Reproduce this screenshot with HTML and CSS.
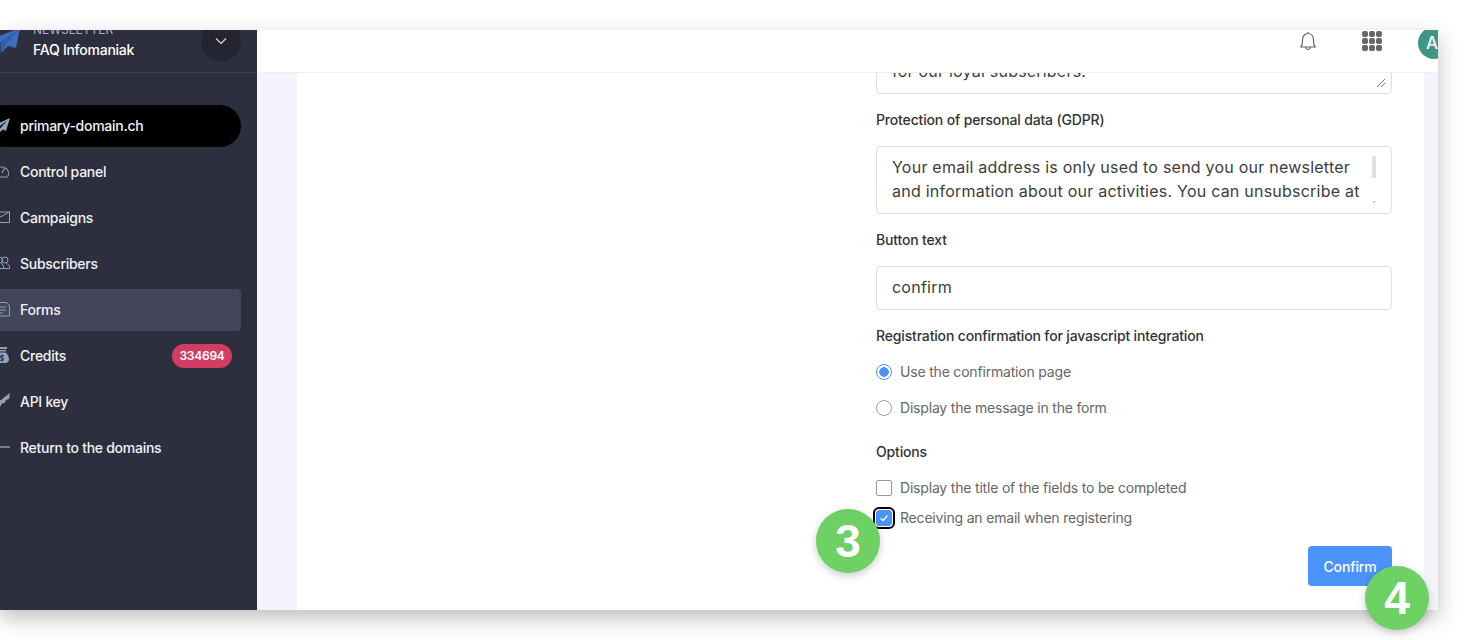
FILE: index.html
```html
<!DOCTYPE html>
<html lang="en">
<head>
    <meta charset="UTF-8">
    <title>FAQ Infomaniak - Newsletter</title>
    <link rel="stylesheet" href="styles.css">
</head>
<body>
    <div class="window">
        <aside class="sidebar">
            <div class="side-head">
                <svg class="logo" viewBox="0 0 24 24"><path d="M24 -1 L-2 9 L4.500 13 L5 24 L12 17 L20 19 Z" fill="#3a6fc0"/><path d="M24 -1 L4.500 13 L5 24 L10 15 Z" fill="#2f5ea8"/></svg>
                <div class="side-title">
                    <span class="side-kicker">NEWSLETTER</span>
                    <span class="side-name">FAQ Infomaniak</span>
                </div>
                <div class="side-toggle">
                    <svg width="14" height="14" viewBox="0 0 14 14"><path d="M2 4.500 L7 9.500 L12 4.500" fill="none" stroke="#d5d8e2" stroke-width="1.200"/></svg>
                </div>
            </div>
            <nav class="side-nav">
                <a class="nav-item nav-domain">
                    <svg class="nav-icon" viewBox="0 0 16 16"><path d="M16 1 L0 8 L4 10.500 L13 3.500 L6 11.500 L6 15 L9 12.500 L12 14 Z" fill="#8fa3bd"/></svg>
                    primary-domain.ch
                </a>
                <a class="nav-item">
                    <svg class="nav-icon" viewBox="0 0 16 16"><path d="M2.500 14 A6.500 6.500 0 1 1 13.500 14 Z M8 10 L10.500 5 M4 8 H6" fill="none" stroke="#8fa3bd" stroke-width="1.100"/></svg>
                    Control panel
                </a>
                <a class="nav-item">
                    <svg class="nav-icon" viewBox="0 0 16 16"><path d="M.5 3 H15.500 V13.500 H.5 Z M.5 11 L15.500 3" fill="none" stroke="#8fa3bd" stroke-width="1"/></svg>
                    Campaigns
                </a>
                <a class="nav-item">
                    <svg class="nav-icon" viewBox="0 0 16 16"><circle cx="5.500" cy="5" r="3" fill="none" stroke="#8fa3bd"/><circle cx="11" cy="5" r="3" fill="none" stroke="#8fa3bd"/><path d="M3.500 8 L.5 11 V13.500 H9.500 V11 L7.500 8 M12.500 8 L15.500 11 V13.500 H9.500" fill="none" stroke="#8fa3bd"/></svg>
                    Subscribers
                </a>
                <a class="nav-item nav-active">
                    <svg class="nav-icon" viewBox="0 0 16 16"><path d="M.5 1.500 H12.500 L15.500 4.500 V15 H.5 M4 6 H12 M4 9 H12 M4 12 H9" fill="none" stroke="#8fa3bd" stroke-width="1"/></svg>
                    Forms
                </a>
                <a class="nav-item">
                    <svg class="nav-icon" viewBox="0 0 16 16"><path d="M3 0 H13 V2 H3 Z M4 3 H12 V4.500 H4 Z M4 5.500 H12 Q15 9 15 12 Q15 16 11 16 H5 Q1 16 1 12 Q1 9 4 5.500 Z" fill="#8fa3bd"/><path d="M10 9 Q8 8 6.500 9 Q6 11 8 11 Q10 11 9.500 13 Q8 14 6 13 M8 7.500 V14.500" fill="none" stroke="#2d2f3e"/></svg>
                    Credits
                    <span class="nav-badge">334694</span>
                </a>
                <a class="nav-item">
                    <svg class="nav-icon" viewBox="0 0 16 16"><path d="M16 0 L15 6 L12 7 L11 9.500 Q8.500 10 7.500 11 Q6 16 1.500 15 Q-1.500 11 2 8 L7 7 Z" fill="#8fa3bd"/></svg>
                    API key
                </a>
                <a class="nav-item">
                    <svg class="nav-icon" viewBox="0 0 16 16"><path d="M0 8 H16" fill="none" stroke="#8fa3bd" stroke-width="1.400"/></svg>
                    Return to the domains
                </a>
            </nav>
        </aside>
        <div class="main">
            <header class="topbar">
                <svg class="top-icon" width="18" height="20" viewBox="0 0 18 20"><path d="M9 1 V2.500 M2 16 C3.500 14 3.500 12 3.500 9 C3.500 5 6 2.500 9 2.500 C12 2.500 14.500 5 14.500 9 C14.500 12 14.500 14 16 16 Z M1 16 H17 M6.500 16.500 C7 19 11 19 11.500 16.500" fill="none" stroke="#666" stroke-width="1.200"/></svg>
                <div class="apps">
                    <i></i><i></i><i></i><i></i><i></i><i></i><i></i><i></i><i></i>
                </div>
                <div class="avatar">AJ</div>
            </header>
            <div class="content">
                <section class="panel">
                    <form class="form">
                        <div class="field field-clipped">
                            for our loyal subscribers.
                            <svg class="grip" width="10" height="10" viewBox="0 0 10 10"><path d="M1 9 L9 1 M5 9 L9 5" stroke="#555" stroke-width=".8"/></svg>
                        </div>
                        <label class="field-label">Protection of personal data (GDPR)</label>
                        <div class="field field-scroll">
                            Your email address is only used to send you our newsletter<br>and information about our activities. You can unsubscribe at
                            <span class="scroll-thumb"></span>
                            <span class="scroll-corner"></span>
                        </div>
                        <label class="field-label">Button text</label>
                        <div class="field field-input">confirm</div>
                        <label class="field-label">Registration confirmation for javascript integration</label>
                        <div class="choice choice-radio">
                            <span class="radio radio-on"></span>
                            Use the confirmation page
                        </div>
                        <div class="choice choice-radio">
                            <span class="radio"></span>
                            Display the message in the form
                        </div>
                        <label class="field-label label-options">Options</label>
                        <div class="choice">
                            <span class="check"></span>
                            Display the title of the fields to be completed
                        </div>
                        <div class="choice choice-next">
                            <span class="check check-on">
                                <svg width="12" height="12" viewBox="0 0 12 12"><path d="M2.500 6.200 L5 8.500 L9.500 3.500" fill="none" stroke="#fff" stroke-width="1.300"/></svg>
                            </span>
                            Receiving an email when registering
                        </div>
                        <div class="form-actions">
                            <button type="button" class="btn-confirm">Confirm</button>
                        </div>
                    </form>
                </section>
            </div>
        </div>
    </div>
    <div class="step step-3">3</div>
    <div class="step step-4">4</div>
</body>
</html>
```

FILE: styles.css
```css
html, body {
    margin: 0;
    height: 640px;
    overflow: hidden;
    background-color: #fff;
}
body {
    font-family: Inter, 'Liberation Sans', sans-serif;
    color: #333;
    padding-top: 30px;
    box-sizing: border-box;
    position: relative;
}
.window {
    width: 1438px;
    height: 580px;
    display: flex;
    overflow: hidden;
    box-shadow: 0 8px 20px rgba(0, 0, 0, 0.26);
}
.sidebar {
    width: 257px;
    flex-shrink: 0;
    background-color: #2d2f3e;
    overflow: hidden;
}
.side-head {
    height: 42px;
    display: flex;
    border-bottom: 1px solid #3f4157;
}
.logo {
    width: 24px;
    height: 24px;
    margin-left: -4px;
    margin-top: -1px;
    overflow: visible;
    flex-shrink: 0;
}
.side-title {
    display: flex;
    flex-direction: column;
    align-self: flex-end;
    margin-left: 13px;
    padding-bottom: 12px;
    white-space: nowrap;
}
.side-kicker {
    font-size: 12px;
    line-height: 20px;
    color: #a7afc0;
    margin-top: -20px;
}
.side-name {
    font-size: 14px;
    line-height: 20px;
    font-weight: 500;
    letter-spacing: -0.25px;
    color: #fff;
}
.side-toggle {
    width: 40px;
    height: 40px;
    border-radius: 50%;
    background-color: #23242f;
    margin-left: auto;
    margin-right: 16px;
    margin-top: -9px;
    display: flex;
    align-items: center;
    justify-content: center;
    flex-shrink: 0;
}
.side-nav {
    width: 257px;
    margin-left: -16px;
    margin-top: 32px;
    display: flex;
    flex-direction: column;
    gap: 4px;
}
.nav-item {
    height: 42px;
    display: flex;
    align-items: center;
    gap: 10px;
    padding: 0 9px 2px 10px;
    box-sizing: border-box;
    font-size: 14px;
    font-weight: 500;
    letter-spacing: -0.27px;
    color: #f1f2f6;
    white-space: nowrap;
}
.nav-icon {
    width: 16px;
    height: 16px;
    flex-shrink: 0;
}
.nav-domain {
    background-color: #000;
    border-radius: 21px;
}
.nav-active {
    background-color: #424459;
    border-radius: 4px;
}
.nav-badge {
    margin-left: auto;
    margin-top: 2px;
    width: 60px;
    height: 24px;
    border-radius: 12px;
    background-color: #d33c63;
    color: #fff;
    font-size: 12px;
    font-weight: 600;
    line-height: 24px;
    text-align: center;
    letter-spacing: -0.25px;
}
.main {
    flex: 1;
    min-width: 0;
    display: flex;
    flex-direction: column;
}
.topbar {
    height: 42px;
    flex-shrink: 0;
    background-color: #fff;
    border-bottom: 1px solid #eee;
    display: flex;
    align-items: flex-start;
    justify-content: flex-end;
    position: relative;
    z-index: 1;
}
.top-icon {
    margin-top: 1px;
    margin-right: 45px;
}
.apps {
    width: 20px;
    height: 20px;
    margin-top: 1px;
    margin-right: 36px;
    display: grid;
    grid-template-columns: repeat(3, 1fr);
    gap: 1px;
}
.apps i {
    background-color: #666;
    border-radius: 2px;
}
.avatar {
    width: 32px;
    height: 32px;
    margin-top: -3px;
    margin-right: -12px;
    padding-left: 8px;
    box-sizing: border-box;
    flex-shrink: 0;
    border-radius: 50%;
    background-color: #3f9685;
    color: #fff;
    font-size: 17px;
    font-weight: 500;
    line-height: 32px;
    white-space: nowrap;
}
.content {
    flex: 1;
    min-height: 0;
    background-color: #f4f4fd;
    padding: 0 14px 0 40px;
    overflow: hidden;
}
.panel {
    height: 100%;
    background-color: #fff;
    display: flex;
    justify-content: flex-end;
    padding-right: 32px;
}
.form {
    width: 516px;
    margin-top: -47px;
    display: flex;
    flex-direction: column;
}
.field {
    position: relative;
    box-sizing: border-box;
    border: 1px solid #e0e0e0;
    border-radius: 4px;
    padding: 8px 15px;
    font-size: 16px;
    line-height: 24px;
    letter-spacing: 0.23px;
    color: #3d3d3d;
    white-space: nowrap;
    flex-shrink: 0;
}
.field-clipped {
    height: 68px;
    padding-top: 32px;
}
.field-scroll {
    height: 68px;
}
.field-input {
    height: 44px;
}
.grip {
    position: absolute;
    right: 5px;
    bottom: 5px;
}
.scroll-thumb {
    position: absolute;
    left: 495px;
    top: 9px;
    width: 4px;
    height: 22px;
    background-color: #e0e0e0;
}
.scroll-corner {
    position: absolute;
    left: 496px;
    top: 54px;
    width: 3px;
    height: 3px;
    border-top: 1px solid #ccc;
    border-left: 1px solid #ccc;
    box-sizing: border-box;
}
.field-label {
    display: block;
    font-size: 14px;
    line-height: 20px;
    font-weight: 500;
    letter-spacing: -0.16px;
    color: #333;
    margin: 16px 0;
}
.label-options {
    margin-top: 24px;
}
.choice {
    display: flex;
    align-items: center;
    gap: 8px;
    height: 20px;
    font-size: 14px;
    line-height: 20px;
    letter-spacing: -0.19px;
    color: #666;
    white-space: nowrap;
    flex-shrink: 0;
}
.choice-radio + .choice-radio {
    margin-top: 16px;
}
.choice-next {
    margin-top: 10px;
}
.radio {
    width: 16px;
    height: 16px;
    box-sizing: border-box;
    border-radius: 50%;
    border: 1px solid #999;
    flex-shrink: 0;
}
.radio-on {
    border-color: #4c92fb;
    background: radial-gradient(circle, #4c92fb 0 4.500px, #fff 5px);
}
.check {
    width: 16px;
    height: 16px;
    box-sizing: border-box;
    border: 1px solid #999;
    border-radius: 2px;
    flex-shrink: 0;
}
.check-on {
    display: flex;
    align-items: center;
    justify-content: center;
    background-color: #4c92fb;
    border-color: #4c92fb;
    outline: 2px solid #000;
    outline-offset: 1px;
    border-radius: 3px;
}
.form-actions {
    display: flex;
    justify-content: flex-end;
    margin-top: 18px;
}
.btn-confirm {
    width: 84px;
    height: 40px;
    border: none;
    border-radius: 4px;
    background-color: #4c92fb;
    color: #fff;
    font-family: inherit;
    font-size: 14px;
    font-weight: 500;
    letter-spacing: -0.15px;
}
.step {
    position: absolute;
    width: 64px;
    height: 64px;
    border-radius: 50%;
    background-color: #6dd163;
    color: #fff;
    font-family: 'Liberation Sans', Arial, sans-serif;
    font-size: 46px;
    font-weight: 700;
    line-height: 64px;
    text-align: center;
    box-shadow: 0 3px 8px rgba(0, 0, 0, 0.2);
}
.step-3 {
    left: 816px;
    top: 509px;
}
.step-4 {
    left: 1365px;
    top: 566px;
}
```
